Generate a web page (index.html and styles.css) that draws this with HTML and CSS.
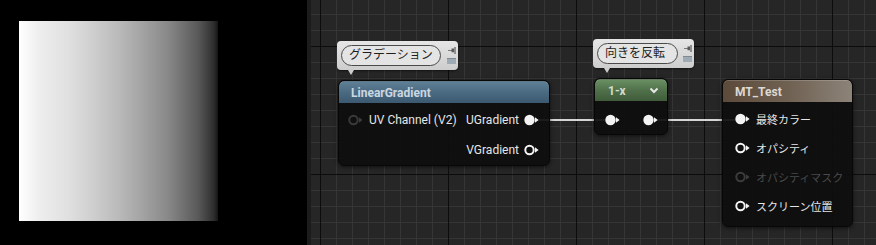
FILE: index.html
```html
<!DOCTYPE html>
<html lang="ja">
<head>
    <meta charset="UTF-8">
    <title>Material Graph - MT_Test</title>
    <link rel="stylesheet" href="styles.css">
</head>
<body>
    <svg class="defs" width="0" height="0">
        <symbol id="pin-filled" viewBox="0 0 16 12">
            <circle cx="5.5" cy="6" r="5.2" fill="currentColor"/>
            <path d="M11 3.3 L14.6 6 L11 8.7 Z" fill="currentColor"/>
        </symbol>
        <symbol id="pin-hollow" viewBox="0 0 16 12">
            <circle cx="5.5" cy="6" r="4.2" fill="none" stroke="currentColor" stroke-width="2"/>
            <path d="M11 3.3 L14.6 6 L11 8.7 Z" fill="currentColor"/>
        </symbol>
        <symbol id="pushpin" viewBox="0 0 8 7">
            <path d="M0 3 H4 V3.8 H0 Z M3.5 1.5 H6 V5.3 H3.5 Z M6.4 0 H7.6 V7 H6.4 Z" fill="currentColor"/>
        </symbol>
    </svg>

    <div class="editor">
        <div class="preview">
            <div class="swatch"></div>
        </div>
        <div class="splitter"></div>

        <div class="graph">
            <!-- wires sit under the nodes -->
            <div class="wire wire-a"></div>
            <div class="wire wire-b"></div>

            <div class="comment comment-a">
                <span class="comment-pill">グラデーション</span>
                <div class="comment-tools">
                    <svg class="pushpin"><use href="#pushpin"/></svg>
                    <span class="comment-box"></span>
                </div>
            </div>

            <div class="comment comment-b">
                <span class="comment-pill">向きを反転</span>
                <div class="comment-tools">
                    <svg class="pushpin"><use href="#pushpin"/></svg>
                    <span class="comment-box"></span>
                </div>
            </div>

            <div class="node node-gradient">
                <div class="node-head head-blue">LinearGradient</div>
                <div class="node-body">
                    <div class="pin-row">
                        <div class="pin-in dim-pin">
                            <svg class="pin"><use href="#pin-hollow"/></svg>
                            <span class="pin-label">UV Channel (V2)</span>
                        </div>
                        <div class="pin-out">
                            <span class="pin-label">UGradient</span>
                            <svg class="pin"><use href="#pin-filled"/></svg>
                        </div>
                    </div>
                    <div class="pin-row">
                        <div></div>
                        <div class="pin-out">
                            <span class="pin-label">VGradient</span>
                            <svg class="pin"><use href="#pin-hollow"/></svg>
                        </div>
                    </div>
                </div>
            </div>

            <div class="node node-oneminus">
                <div class="node-head head-green">
                    <span>1-x</span>
                    <svg class="chevron" viewBox="0 0 10 7"><polyline points="1.5,1.5 5,5 8.5,1.5" fill="none" stroke="#e6e6e6" stroke-width="2"/></svg>
                </div>
                <div class="node-body">
                    <div class="pin-row">
                        <svg class="pin"><use href="#pin-filled"/></svg>
                        <svg class="pin"><use href="#pin-filled"/></svg>
                    </div>
                </div>
            </div>

            <div class="node node-result">
                <div class="node-head head-brown">MT_Test</div>
                <div class="node-body result-body">
                    <div class="pin-in">
                        <svg class="pin"><use href="#pin-filled"/></svg>
                        <span class="pin-label jp">最終カラー</span>
                    </div>
                    <div class="pin-in">
                        <svg class="pin"><use href="#pin-hollow"/></svg>
                        <span class="pin-label jp">オパシティ</span>
                    </div>
                    <div class="pin-in disabled">
                        <svg class="pin"><use href="#pin-hollow"/></svg>
                        <span class="pin-label jp">オパシティマスク</span>
                    </div>
                    <div class="pin-in">
                        <svg class="pin"><use href="#pin-hollow"/></svg>
                        <span class="pin-label jp">スクリーン位置</span>
                    </div>
                </div>
            </div>
        </div>
    </div>
</body>
</html>
```

FILE: styles.css
```css
body {
    margin: 0;
    background: #000;
    font-family: Roboto, "Noto Sans CJK JP", sans-serif;
    overflow: hidden;
}
.defs {
    position: absolute;
}
.editor {
    display: flex;
    width: 876px;
    height: 245px;
}
.preview {
    width: 307px;
    padding: 21px 0 0 19px;
    box-sizing: border-box;
}
.swatch {
    width: 199px;
    height: 200px;
    background: linear-gradient(to right, #fff 0%, #eeeeee 10%, #e0e0e0 25%, #cdcdcd 38%, #bababa 50%, #a3a3a3 62%, #888 75%, #6c6c6c 84%, #595959 90%, #3e3e3e 95%, #2c2c2c 98%, #151515 100%);
}
.splitter {
    width: 4px;
    background: #1c1c1c;
}
.graph {
    position: relative;
    flex: 1;
    background-color: #262626;
    background-image:
        linear-gradient(to right, #0c0c0c 1px, transparent 1px),
        linear-gradient(to bottom, #0c0c0c 1px, transparent 1px),
        linear-gradient(to right, #353535 1px, transparent 1px),
        linear-gradient(to bottom, #353535 1px, transparent 1px);
    background-size: 128px 100%, 100% 128px, 16px 100%, 100% 16px;
    background-position: 9px 0, 0 46px, 9px 0, 0 14px;
}

/* wires */
.wire {
    position: absolute;
    top: 119px;
    height: 2px;
    background: #d6d6d6;
}
.wire-a {
    left: 224px;
    width: 72px;
}
.wire-b {
    left: 342px;
    width: 84px;
}

/* comment bubbles */
.comment {
    position: absolute;
    display: flex;
    justify-content: space-between;
    height: 29px;
    padding: 4px 2px 0 4px;
    box-sizing: border-box;
    background: linear-gradient(#e6e6e6, #cdcdcd);
    border-radius: 4px;
    box-shadow: 0 1px 2px rgba(0,0,0,0.5);
}
.comment::after {
    content: "";
    position: absolute;
    left: 11px;
    bottom: -5px;
    border-left: 3px solid transparent;
    border-right: 3px solid transparent;
    border-top: 5px solid #cdcdcd;
}
.comment-a {
    left: 26px;
    top: 41px;
    width: 121px;
}
.comment-b {
    left: 282px;
    top: 39px;
    width: 101px;
}
.comment-pill {
    height: 21px;
    line-height: 19px;
    padding: 0 7px;
    border: 1.5px solid #4a4a4a;
    border-radius: 11px;
    box-sizing: border-box;
    font-size: 12px;
    color: #1e1e1e;
    background: #e4e4e4;
}
.comment-a .comment-pill {
    width: 100px;
}
.comment-b .comment-pill {
    width: 81px;
}
.comment-tools {
    display: flex;
    flex-direction: column;
    align-items: flex-end;
    gap: 4px;
    padding-top: 2px;
}
.pushpin {
    width: 8px;
    height: 7px;
    color: #5a5a5a;
}
.comment-box {
    width: 9px;
    height: 5px;
    background: #9eaab4;
    border-top: 1px solid #7f8a94;
}

/* nodes */
.node {
    position: absolute;
    background: rgba(14, 14, 14, 0.93);
    border: 1px solid #070707;
    border-radius: 6px;
    box-shadow: 0 1px 4px rgba(0,0,0,0.6);
    overflow: hidden;
    color: #e6e6e6;
    font-size: 12px;
    box-sizing: border-box;
}
.node-head {
    display: flex;
    align-items: center;
    justify-content: space-between;
    height: 21px;
    padding: 0 12px;
    font-weight: bold;
    border-top: 1px solid rgba(255,255,255,0.18);
    border-radius: 5px 5px 0 0;
}
.head-blue {
    background: linear-gradient(#5f7f95, #4a6a81 50%, #3b5a71);
    color: #cad7e0;
}
.head-green {
    background: linear-gradient(#6a8f63, #4f7049 50%, #405c3b);
    color: #d2dccf;
}
.head-brown {
    background: linear-gradient(to right, #5c4a3a, #6f6152 50%, #8c8379);
    color: #ddd8d2;
}
.chevron {
    width: 10px;
    height: 7px;
}
.node-body {
    padding: 6px 9px 4px;
}
.pin-row {
    display: flex;
    justify-content: space-between;
    align-items: center;
    height: 22px;
    margin-bottom: 8px;
}
.pin-in, .pin-out {
    display: flex;
    align-items: center;
    gap: 5px;
}
.pin {
    width: 16px;
    height: 12px;
    color: #f4f4f4;
}
.dim-pin .pin {
    color: #3a3a3a;
}
.pin-label {
    white-space: nowrap;
}
.jp {
    font-size: 11px;
}
.disabled {
    color: #4a4a4a;
}
.disabled .pin {
    color: #3c3c3c;
}

.node-gradient {
    left: 27px;
    top: 80px;
    width: 212px;
    height: 86px;
}
.node-oneminus {
    left: 283px;
    top: 78px;
    width: 74px;
    height: 57px;
}
.node-oneminus .node-head {
    padding: 0 8px 0 13px;
}
.node-oneminus .node-body {
    padding: 8px 8px 0 10px;
}
.node-result {
    left: 411px;
    top: 79px;
    width: 131px;
    height: 148px;
}
.result-body {
    display: flex;
    flex-direction: column;
    gap: 7px;
    padding: 6px 0 0 12px;
}
.result-body .pin-in {
    height: 22px;
}
```
